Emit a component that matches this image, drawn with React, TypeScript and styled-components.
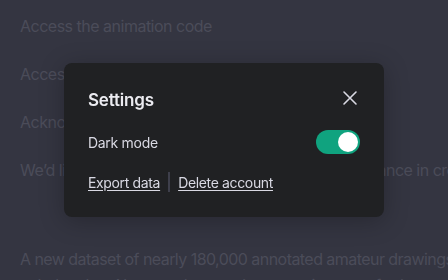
import React from 'react';
import styled, { createGlobalStyle } from 'styled-components';

const GlobalStyle = createGlobalStyle`
  html, body {
    margin: 0;
    padding: 0;
    background: #343541;
    overflow: hidden;
  }
  body {
    font-family: Inter, "Noto Sans", sans-serif;
  }
`;

const Page = styled.div`
  width: 448px;
  height: 280px;
  overflow: hidden;
  padding: 14px 20px 0;
  box-sizing: border-box;
  background: #343541;
`;

const Line = styled.p<{ $gap?: number }>`
  margin: 0 0 ${(p) => p.$gap ?? 24}px;
  font-size: 16px;
  line-height: 24px;
  letter-spacing: -0.5px;
  color: #4b4c59;
  white-space: nowrap;
`;

const Para = styled.p`
  margin: 0;
  font-size: 16px;
  line-height: 26px;
  letter-spacing: -0.55px;
  color: #4b4c59;
  white-space: nowrap;
`;

const Overlay = styled.div`
  position: fixed;
  inset: 0;
  display: flex;
  align-items: center;
  justify-content: center;
`;

const Modal = styled.div`
  width: 320px;
  box-sizing: border-box;
  background: #202123;
  border-radius: 8px;
  padding: 24px 24px 25px;
  box-shadow: 0 4px 24px rgba(0, 0, 0, 0.25);
  color: #ececf1;
`;

const Header = styled.div`
  display: flex;
  align-items: center;
  justify-content: space-between;
  margin-bottom: 17px;
`;

const Title = styled.h2`
  margin: 0;
  font-size: 17px;
  font-weight: 600;
  line-height: 26px;
  letter-spacing: -0.2px;
  color: #ececf1;
`;

const CloseButton = styled.button`
  display: flex;
  background: none;
  border: none;
  padding: 0;
  margin: -4px -2px 0 0;
  color: #d9d9e3;
  cursor: pointer;
`;

const Row = styled.div`
  display: flex;
  align-items: center;
  justify-content: space-between;
  margin-bottom: 18px;
`;

const Label = styled.span`
  font-size: 14px;
  letter-spacing: -0.3px;
  color: #d9d9e3;
`;

const Toggle = styled.div<{ $on: boolean }>`
  width: 44px;
  height: 24px;
  border-radius: 12px;
  background: ${(p) => (p.$on ? '#10a37f' : '#565869')};
  display: flex;
  align-items: center;
  justify-content: ${(p) => (p.$on ? 'flex-end' : 'flex-start')};
  padding: 2px;
  box-sizing: border-box;
`;

const Knob = styled.div`
  width: 20px;
  height: 20px;
  border-radius: 50%;
  background: #ffffff;
`;

const Links = styled.div`
  display: flex;
  align-items: center;
  gap: 8px;
`;

const LinkButton = styled.a`
  font-size: 14px;
  letter-spacing: -0.35px;
  color: #d9d9e3;
  text-decoration: underline;
  text-underline-offset: 2px;
  cursor: pointer;
`;

const Divider = styled.span`
  width: 2px;
  height: 20px;
  background: #3e3f4b;
`;

const App: React.FC = () => {
  return (
    <>
      <GlobalStyle />
      <Page>
        <Line>Access the animation code</Line>
        <Line>Access the training dataset</Line>
        <Line>Acknowledgments</Line>
        <Line $gap={64}>We’d like to thank those collaborators for their guidance in creating this</Line>
        <Para>
          A new dataset of nearly 180,000 annotated amateur drawings
          <br />
          to help other AI researchers and creators innovate further.
        </Para>
      </Page>
      <Overlay>
        <Modal>
          <Header>
            <Title>Settings</Title>
            <CloseButton aria-label="Close">
              <svg width="24" height="24" viewBox="0 0 24 24" fill="none" stroke="currentColor" strokeWidth="1.6" strokeLinecap="round">
                <path d="M6 6l12 12M18 6L6 18" />
              </svg>
            </CloseButton>
          </Header>
          <Row>
            <Label>Dark mode</Label>
            <Toggle $on={true}>
              <Knob />
            </Toggle>
          </Row>
          <Links>
            <LinkButton>Export data</LinkButton>
            <Divider />
            <LinkButton>Delete account</LinkButton>
          </Links>
        </Modal>
      </Overlay>
    </>
  );
};

export default App;
